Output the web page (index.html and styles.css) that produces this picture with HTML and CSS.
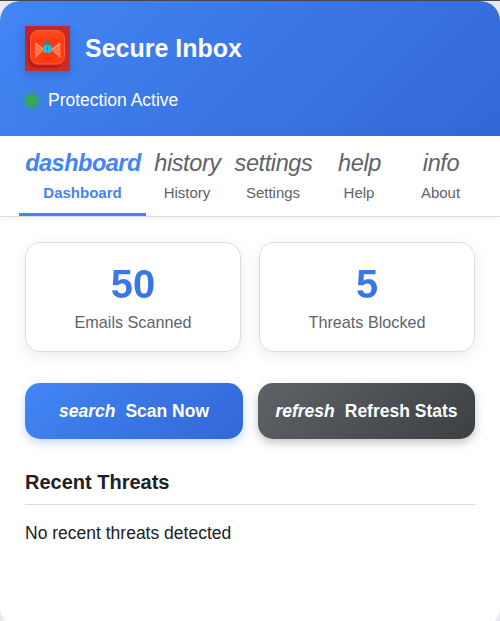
FILE: index.html
```
<!DOCTYPE html>
<html lang="en">
<head>
<meta charset="utf-8">
<title>Secure Inbox</title>
<link rel="stylesheet" href="styles.css">
</head>
<body>
<div class="popup">
  <header class="header">
    <div class="brand">
      <svg class="logo" viewBox="0 0 45 45">
        <defs>
          <linearGradient id="tile" x1="0" y1="0" x2="0" y2="1"><stop offset="0" stop-color="#f94d25"/><stop offset=".3" stop-color="#ff3c10"/><stop offset="1" stop-color="#fe3a14"/></linearGradient>
          <linearGradient id="back" x1="0" y1="0" x2="1" y2="1"><stop offset="0" stop-color="#bd2527"/><stop offset="1" stop-color="#c92f30"/></linearGradient>
          <filter id="soft" x="-20%" y="-20%" width="140%" height="140%"><feGaussianBlur stdDeviation="1.2"/></filter>
        </defs>
        <rect width="45" height="45" fill="url(#back)"/>
        <rect x="4" y="6" width="34" height="35" rx="8" fill="#8c1418" opacity=".8" filter="url(#soft)"/>
        <rect x="5" y="4" width="35" height="35.5" rx="8" fill="#e0240c"/>
        <rect x="5.5" y="4.5" width="34" height="33.5" rx="7.5" fill="url(#tile)" stroke="#ff7048" stroke-width=".7"/>
        <path d="M10.500 17v14.500l8.500-8z M35 17v14.500l-8.500-8z" fill="#fa7850" stroke="#e9a078" stroke-width=".6"/>
        <path d="M10.500 17l9 7M35 17l-9 7" stroke="#ffb48c" stroke-width=".8"/>
        <path d="M19.800 20v-2a2.700 2.700 0 0 1 5.400 0V20" fill="none" stroke="#188b9b" stroke-width="1.500"/>
        <rect x="18.500" y="19.200" width="8" height="7.300" rx="1" fill="#12c8ed"/>
        <path d="M22.500 21.300v3" stroke="#075a76" stroke-width="1.100"/>
      </svg>
      <h1 class="title">Secure Inbox</h1>
    </div>
    <div class="status"><span class="dot"></span><span>Protection Active</span></div>
  </header>
  <nav class="tabs">
    <a class="tab active"><i>dashboard</i><span>Dashboard</span></a>
    <a class="tab"><i>history</i><span>History</span></a>
    <a class="tab"><i>settings</i><span>Settings</span></a>
    <a class="tab"><i>help</i><span>Help</span></a>
    <a class="tab"><i>info</i><span>About</span></a>
  </nav>
  <main class="content">
    <section class="stats">
      <div class="stat"><div class="value">50</div><div class="label">Emails Scanned</div></div>
      <div class="stat"><div class="value">5</div><div class="label">Threats Blocked</div></div>
    </section>
    <div class="actions">
      <button class="btn primary"><i>search</i><span>Scan Now</span></button>
      <button class="btn secondary"><i>refresh</i><span>Refresh Stats</span></button>
    </div>
    <h2 class="heading">Recent Threats</h2>
    <p class="empty">No recent threats detected</p>
  </main>
</div>
</body>
</html>
```
FILE: styles.css
```
* { box-sizing: border-box; margin: 0; }
body {
  height: 621px;
  overflow: hidden;
  border-top: 1px solid #45474c;
  background: #e8eaf0;
  font-family: "Liberation Sans", Arial, sans-serif;
  color: #202124;
}
.popup { height: 626px; border-radius: 20px; overflow: hidden; background: #fff; }
.header {
  height: 135px;
  padding: 25px 25px 0;
  background: linear-gradient(135deg, #4285f4, #3367d6);
  color: #fff;
}
.brand { display: flex; align-items: center; gap: 15px; }
.logo { width: 45px; height: 45px; box-shadow: 0 4px 8px rgba(0, 0, 0, .15); }
.title { font-size: 25px; line-height: 45px; }
.status { display: flex; align-items: center; gap: 10px; margin-top: 19px; font-size: 17.500px; line-height: 20px; }
.dot { width: 13px; height: 13px; border-radius: 50%; background: #34a853; box-shadow: 0 0 10px rgba(52, 168, 83, .8); }
.tabs {
  display: grid;
  grid-template-columns: 127px 82px 90px 82px 81px;
  height: 81px;
  padding: 0 19px;
  border-bottom: 1px solid #dadce0;
  box-shadow: 0 2px 10px rgba(0, 0, 0, .05);
}
.tab {
  display: flex;
  flex-direction: column;
  align-items: center;
  padding-top: 14px;
  border-bottom: 3px solid transparent;
  font-size: 15px;
  line-height: 18px;
  color: #5f6368;
}
.tab i { margin-bottom: 8px; padding-left: 1px; font-size: 23.500px; letter-spacing: -.4px; line-height: 26px; }
.tab.active { border-color: #4285f4; color: #4285f4; font-weight: bold; }
.tab.active i { letter-spacing: -.5px; }
.content { padding: 25px; }
.stats { display: grid; grid-template-columns: 1fr 1fr; gap: 18px; }
.stat {
  height: 110px;
  padding-top: 18px;
  border: 1px solid #dadce0;
  border-radius: 15px;
  box-shadow: 0 4px 15px rgba(0, 0, 0, .08);
  text-align: center;
}
.value {
  font-size: 40px;
  font-weight: bold;
  line-height: 46px;
  background: linear-gradient(135deg, #4285f4, #3367d6);
  background-clip: text;
  color: transparent;
}
.label { margin-top: 5px; font-size: 16.200px; line-height: 20px; color: #5f6368; }
.actions { display: grid; grid-template-columns: 218px 217px; gap: 15px; margin-top: 31px; }
.btn {
  display: flex;
  align-items: center;
  justify-content: center;
  gap: 10px;
  height: 56px;
  padding: 0;
  border: 0;
  border-radius: 15px;
  font: bold 17.500px "Liberation Sans", Arial, sans-serif;
  color: #fff;
}
.primary { background: linear-gradient(135deg, #4285f4, #3367d6); box-shadow: 0 4px 10px rgba(66, 133, 244, .3); }
.secondary { background: linear-gradient(135deg, #5f6368, #3c4043); box-shadow: 0 4px 10px rgba(60, 64, 67, .3); }
.heading {
  height: 36px;
  margin-top: 30px;
  border-bottom: 1px solid #dadce0;
  font-size: 20px;
  line-height: 26px;
}
.empty { margin-top: 18px; font-size: 17.500px; line-height: 20px; }
```
